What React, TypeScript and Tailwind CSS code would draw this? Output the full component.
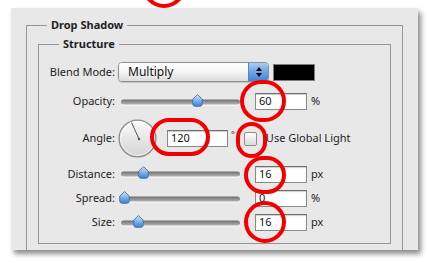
import type { ReactNode } from "react";

function Knob() {
  return (
    <svg width="11" height="13" viewBox="0 0 11 13" aria-hidden>
      <defs>
        <linearGradient id="knob" x1="0" y1="0" x2="0" y2="1">
          <stop offset="0" stopColor="#d4e8fb" />
          <stop offset="0.5" stopColor="#7fb2ea" />
          <stop offset="1" stopColor="#3c7fd0" />
        </linearGradient>
      </defs>
      <path
        d="M5.5 0.7 L10.3 5.2 L10.3 9.8 Q10.3 12.3 7.8 12.3 L3.2 12.3 Q0.7 12.3 0.7 9.8 L0.7 5.2 Z"
        fill="url(#knob)"
        stroke="#3f6ea6"
        strokeWidth="0.9"
      />
    </svg>
  );
}

function Slider({ at }: { at: number }) {
  return (
    <div className="relative ml-[3px] h-full w-[122px]">
      <div className="absolute left-[3px] right-0 top-1/2 h-[5px] -translate-y-1/2 rounded-full bg-gradient-to-b from-[#6f6f6f] to-[#b4b4b4] shadow-[0_1px_0_#fff]" />
      <div className="absolute top-1/2 -translate-y-[8px]" style={{ left: at - 5 }}>
        <Knob />
      </div>
    </div>
  );
}

function Field({ value, className = "w-[52px]" }: { value: string; className?: string }) {
  return (
    <div
      className={`flex h-[17px] items-center border border-[#8a8a8a] border-t-[#6e6e6e] bg-white pl-[3px] text-[11px] text-[#111] shadow-[inset_0_1px_1px_rgba(0,0,0,0.2)] ${className}`}
    >
      {value}
    </div>
  );
}

function Row({ label, className, children }: { label: string; className: string; children: ReactNode }) {
  return (
    <div className={`flex items-center ${className}`}>
      <span className="w-[76px] text-right">{label}</span>
      {children}
    </div>
  );
}

function SliderRow({ label, at, value, unit, className }: { label: string; at: number; value: string; unit: string; className: string }) {
  return (
    <Row label={label} className={className}>
      <Slider at={at} />
      <div className="ml-[15px]">
        <Field value={value} />
      </div>
      <span className="ml-[4px]">{unit}</span>
    </Row>
  );
}

function Dial() {
  return (
    <svg width="39" height="39" viewBox="0 0 39 39" aria-hidden>
      <defs>
        <linearGradient id="dial" x1="0" y1="0" x2="0" y2="1">
          <stop offset="0" stopColor="#fbfbfb" />
          <stop offset="1" stopColor="#d3d3d3" />
        </linearGradient>
      </defs>
      <circle cx="19.5" cy="19.5" r="18.4" fill="url(#dial)" stroke="#8b8b8b" strokeWidth="1.3" />
      <circle cx="19.5" cy="19.5" r="16.8" fill="none" stroke="#ffffff" strokeWidth="0.8" opacity="0.8" />
      <line x1="21" y1="20" x2="13.5" y2="3.5" stroke="#555" strokeWidth="1" />
      <circle cx="21" cy="20" r="1.2" fill="#555" />
    </svg>
  );
}

export default function App() {
  return (
    <div className="relative h-[263px] w-[428px] overflow-hidden bg-white font-['Noto_Sans',sans-serif] text-[11px] text-[#1e1e24]">
      <div className="ml-[11px] mt-[8px] flex h-[242px] w-[407px] flex-col bg-[#e8e8e8] shadow-[3px_4px_5px_rgba(0,0,0,0.45)]">
        <fieldset className="mx-[15px] mt-[10px] flex min-w-0 flex-1 flex-col border border-b-0 border-[#979797]">
          <legend className="ml-[20px] px-[4px] font-bold leading-[14px]">Drop Shadow</legend>
          <fieldset className="mx-[11px] mb-[6px] mt-[5px] flex min-w-0 flex-1 flex-col border border-[#979797]">
            <legend className="ml-[20px] px-[4px] font-bold leading-[14px]">Structure</legend>

            <Row label="Blend Mode:" className="mt-[11px] h-[20px]">
              <div className="ml-[3px] flex h-[20px] w-[151px] overflow-hidden rounded-[4px] border border-[#8f8f8f] shadow-[0_1px_1px_rgba(0,0,0,0.15)]">
                <div className="flex flex-1 items-center bg-gradient-to-b from-white via-[#f4f4f4] to-[#dcdcdc] pl-[9px] text-[12px] text-[#111]">
                  Multiply
                </div>
                <div className="flex w-[20px] flex-col items-center justify-center gap-[2px] border-l border-[#5a86c0] bg-gradient-to-b from-[#a9cdf4] via-[#6aa4e6] to-[#3f83d8]">
                  <span className="h-0 w-0 border-x-[3px] border-b-[4px] border-x-transparent border-b-black" />
                  <span className="h-0 w-0 border-x-[3px] border-t-[4px] border-x-transparent border-t-black" />
                </div>
              </div>
              <div className="ml-[4px] h-[17px] w-[42px] border border-[#7d7d7d] bg-black" />
            </Row>

            <SliderRow label="Opacity:" at={79} value="60" unit="%" className="mt-[11px] h-[17px]" />

            <Row label="Angle:" className="mt-[9px] h-[39px]">
              <div className="ml-[3px]">
                <Dial />
              </div>
              <div className="ml-[10px]">
                <Field value="120" className="w-[61px]" />
              </div>
              <span className="ml-[3px] -translate-y-[4px] text-[9px]">°</span>
              <div className="ml-[9px] h-[14px] w-[13px] rounded-[2px] border border-[#8d8d8d] bg-gradient-to-b from-white to-[#d9d9d9]" />
              <span className="ml-[9px]">Use Global Light</span>
            </Row>

            <SliderRow label="Distance:" at={25} value="16" unit="px" className="mt-[7px] h-[18px]" />
            <SliderRow label="Spread:" at={6} value="0" unit="%" className="mt-[7px] h-[17px]" />
            <SliderRow label="Size:" at={20} value="16" unit="px" className="mt-[7px] h-[17px]" />
          </fieldset>
        </fieldset>
      </div>

      <div className="absolute left-[142px] top-[-36px] h-[44px] w-[44px] rounded-full border-[4px] border-[#f20000]" />
      <div className="absolute left-[240px] top-[80px] h-[42px] w-[46px] rounded-full border-[4px] border-[#f20000]" />
      <div className="absolute left-[150px] top-[118px] h-[38px] w-[60px] rounded-full border-[4px] border-[#f20000]" />
      <div className="absolute left-[236px] top-[122px] h-[36px] w-[31px] rounded-full border-[4px] border-[#f20000]" />
      <div className="absolute left-[244px] top-[156px] h-[38px] w-[42px] rounded-full border-[4px] border-[#f20000]" />
      <div className="absolute left-[244px] top-[201px] h-[42px] w-[42px] rounded-full border-[4px] border-[#f20000]" />
    </div>
  );
}
